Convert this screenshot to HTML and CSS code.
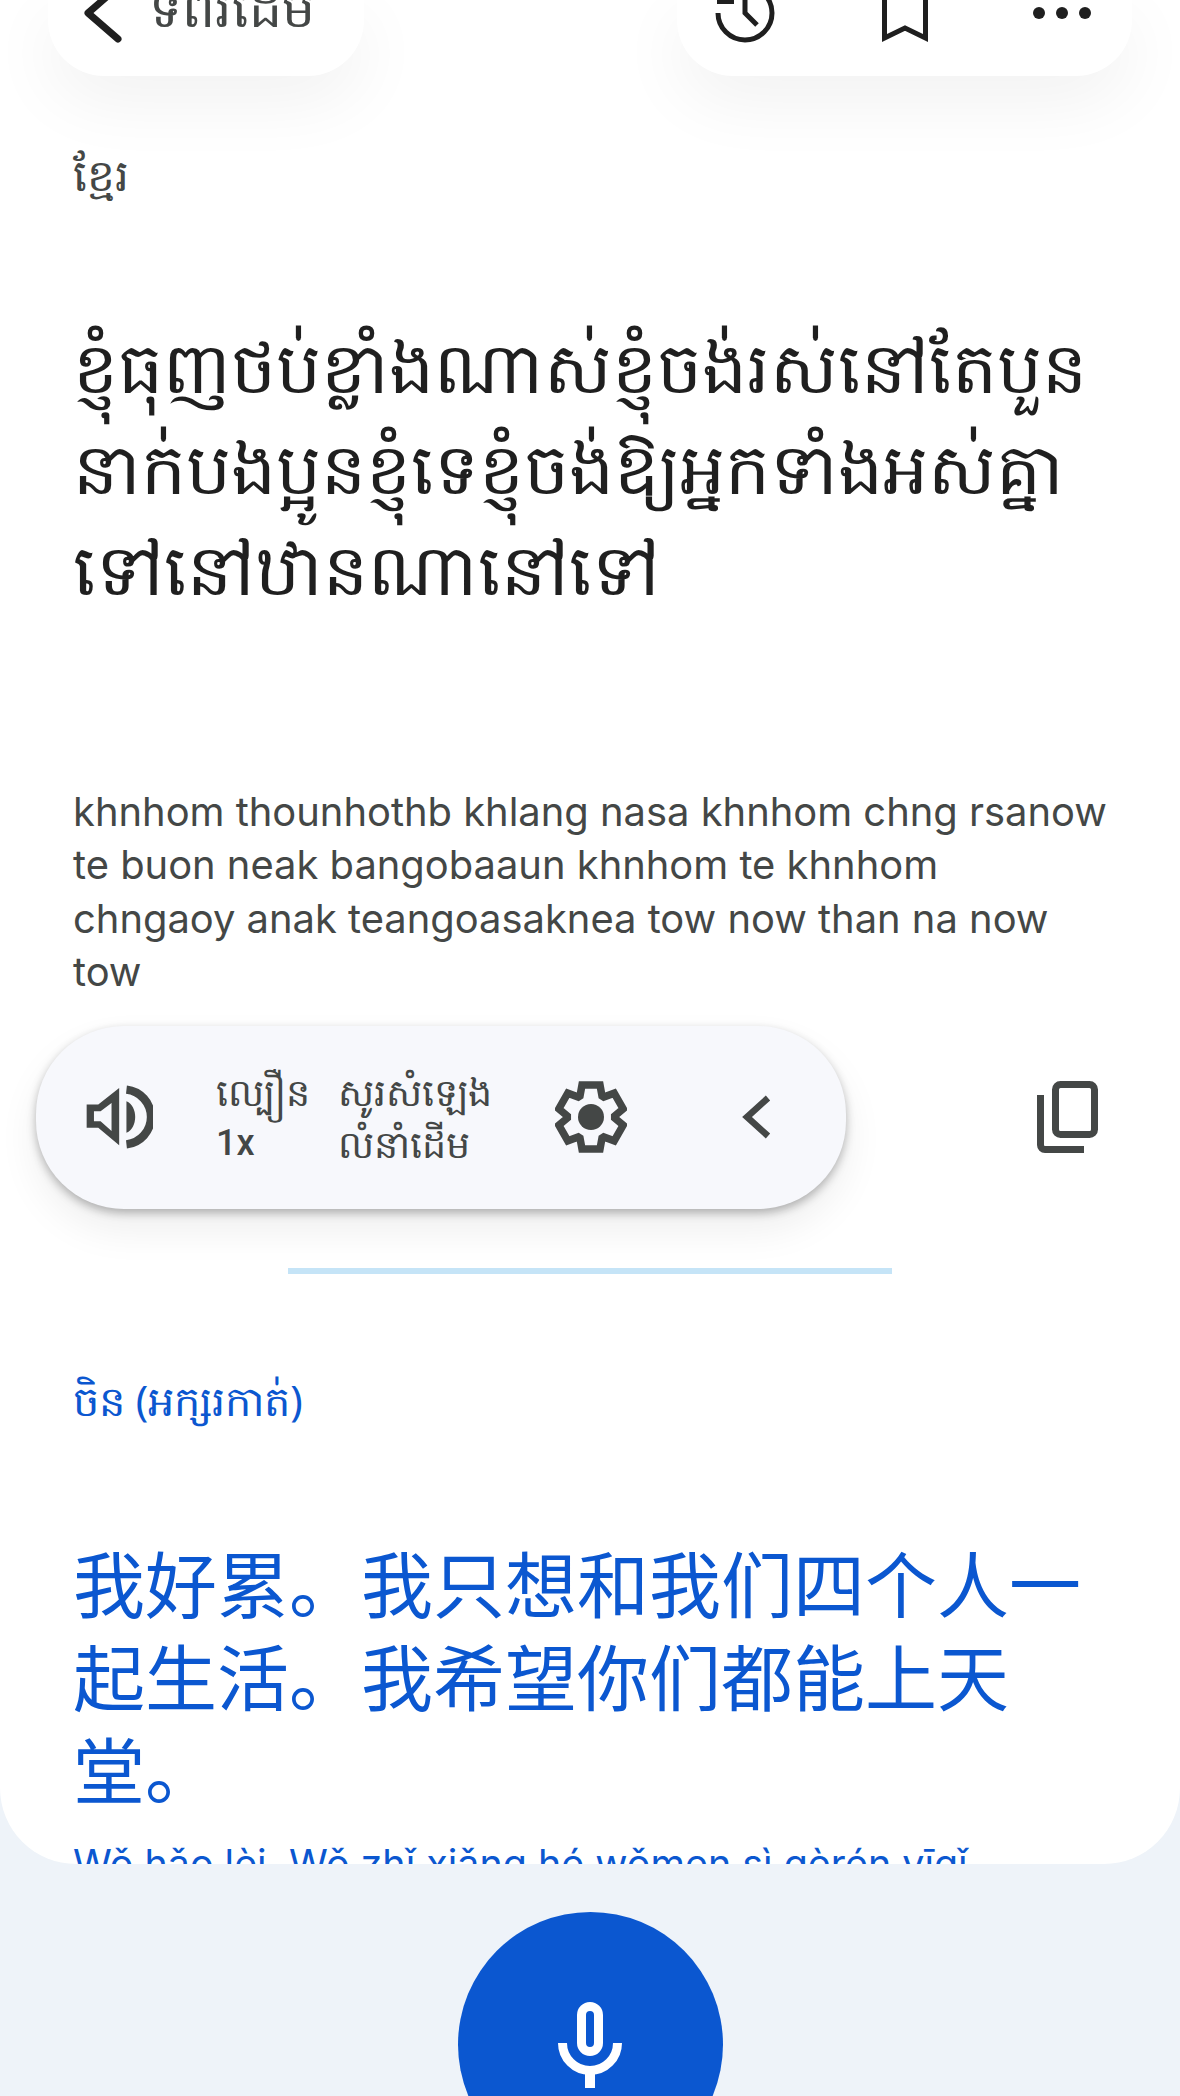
FILE: index.html
```html
<!DOCTYPE html>
<html lang="km">
<head>
<meta charset="utf-8">
<title>Translation</title>
<link rel="stylesheet" href="styles.css">
</head>
<body>
<div class="page">
  <main class="card">
    <header class="topbar">
      <div class="pill back-pill">
        <svg class="top-icon" viewBox="0 0 46 80" width="46" height="80"><path d="M38 7 8 33l30 26" fill="none" stroke="#1f1f1f" stroke-width="7" stroke-linecap="round" stroke-linejoin="round"/></svg>
        <span class="back-label">ទំព័រដើម</span>
      </div>
      <div class="pill action-pill">
        <svg class="top-icon" viewBox="0 0 64 80" width="64" height="80"><path d="M5 33A27 27 0 1 0 32 6M4 21.5h17M32 16v17l12 12" fill="none" stroke="#1f1f1f" stroke-width="5"/></svg>
        <svg class="top-icon" viewBox="0 0 50 80" width="50" height="80"><path d="M4.500 0v58L25 48l20.500 10V0" fill="none" stroke="#1f1f1f" stroke-width="5"/></svg>
        <svg class="top-icon" viewBox="0 0 64 80" width="64" height="80"><circle cx="6" cy="33" r="6" fill="#1f1f1f"/><circle cx="29" cy="33" r="6" fill="#1f1f1f"/><circle cx="52" cy="33" r="6" fill="#1f1f1f"/></svg>
      </div>
    </header>

    <section class="source">
      <p class="lang">ខ្មែរ</p>
      <p class="source-text">ខ្ញុំធុញថប់ខ្លាំងណាស់ខ្ញុំចង់រស់នៅតែបួន<br>នាក់បងប្អូនខ្ញុំទេខ្ញុំចង់ឱ្យអ្នកទាំងអស់គ្នា<br>ទៅនៅឋានណានៅទៅ</p>
      <p class="roman">khnhom thounhothb khlang nasa khnhom chng rsanow te buon neak bangobaaun khnhom te khnhom chngaoy anak teangoasaknea tow now than na now tow</p>
    </section>

    <div class="tools">
      <div class="audio-pill">
        <svg class="speaker" viewBox="165 190 205 205" width="68" height="68"><path fill="#444746" fill-rule="evenodd" d="M170 255h35l63-50v173l-63-53h-35zM192 275v30h20l33 30v-85l-33 25z"/><path fill="#444746" d="M290 245c35 15 35 80 0 95z"/><path d="M290 210a83 83 0 0 1 0 165" fill="none" stroke="#444746" stroke-width="25"/></svg>
        <div class="setting speed"><span>ល្បឿន</span><span class="latin">1x</span></div>
        <div class="setting voice"><span>សូរសំឡេង</span><span>លំនាំដើម</span></div>
        <svg class="gear" viewBox="0 0 72 72" width="72" height="72"><path fill="none" stroke="#444746" stroke-width="7.500" d="M27 4h18l2 11 1.700 1 10.500-3.800 9 15.600-8.500 7.200v2l8.500 7.200-9 15.600L48.700 56l-1.700 1-2 11H27l-2-11-1.700-1-10.500 3.800-9-15.600 8.500-7.200v-2l-8.500-7.200 9-15.600L23.300 16l1.700-1z"/><circle cx="36" cy="36" r="13" fill="#444746"/></svg>
        <svg class="chev" viewBox="0 0 32 48" width="32" height="48"><path d="M27 5 6 24l21 19" fill="none" stroke="#444746" stroke-width="6.500"/></svg>
      </div>
      <svg class="copy" viewBox="0 0 64 74" width="64" height="74"><rect x="19.500" y="4.500" width="39" height="50" rx="5" fill="none" stroke="#444746" stroke-width="7"/><path d="M4.500 15v50a4.500 4.500 0 0 0 4.500 4.500h39" fill="none" stroke="#444746" stroke-width="7"/></svg>
    </div>

    <div class="divider"></div>

    <section class="target">
      <p class="lang lang-blue">ចិន (អក្សរកាត់)</p>
      <p class="target-text">我好累。我只想和我们四个人一起生活。我希望你们都能上天堂。</p>
      <p class="roman roman-blue">Wǒ hǎo lèi. Wǒ zhǐ xiǎng hé wǒmen sì gèrén yīqǐ</p>
    </section>
  </main>

  <footer class="bottom">
    <div class="mic-btn">
      <svg viewBox="0 0 64 86" width="64" height="86"><rect x="23.500" y="4.500" width="17" height="45" rx="8.500" fill="none" stroke="#fff" stroke-width="9"/><path d="M4.500 41a27.500 27.500 0 0 0 55 0" fill="none" stroke="#fff" stroke-width="9"/><path d="M32 68v18" fill="none" stroke="#fff" stroke-width="10"/></svg>
    </div>
  </footer>
</div>
</body>
</html>
```
FILE: styles.css
```css
* { box-sizing: border-box; }
html, body { margin: 0; padding: 0; }
body { width: 1180px; height: 2096px; overflow: hidden; background: #eef3f9; font-family: "Noto Sans", "Roboto", sans-serif; }
p { margin: 0; }
.page { width: 1180px; height: 2096px; overflow: hidden; display: flex; flex-direction: column; }
.card { flex: none; height: 1864px; background: #fff; border-radius: 0 0 76px 76px; overflow: hidden; }
.topbar { height: 76px; padding: 0 48px; display: flex; justify-content: space-between; }
.pill { height: 76px; background: #fff; border-radius: 0 0 56px 56px; box-shadow: 0 24px 70px rgba(0,0,0,.06); display: flex; align-items: flex-start; overflow: hidden; }
.top-icon { flex: none; margin-top: -20px; }
.back-pill { width: 316px; padding-left: 32px; }
.back-label { margin-left: 23px; margin-top: -33px; font-size: 52px; line-height: 80px; color: #444746; white-space: nowrap; }
.action-pill { width: 455px; padding-left: 36px; gap: 103px; }
.source { padding: 68px 72px 0 73px; }
.lang { font-size: 44px; line-height: 60px; color: #444746; }
.source-text { margin-top: 111px; font-size: 71px; line-height: 101px; color: #1f1f1f; white-space: nowrap; }
.roman { margin-top: 167px; font-family: "Inter", sans-serif; font-size: 39.9px; line-height: 53.4px; color: #444746; }
.tools { margin-top: 27px; padding: 0 80px 0 36px; display: flex; align-items: center; justify-content: space-between; }
.audio-pill { width: 810px; height: 183px; border-radius: 88px; background: #f7f8fc; box-shadow: 0 4px 10px rgba(0,0,0,.28), 0 20px 40px rgba(0,0,0,.07); display: flex; align-items: center; padding-left: 49px; }
.speaker { flex: none; }
.setting { display: flex; flex-direction: column; font-size: 38px; line-height: 52px; color: #444746; white-space: nowrap; }
.speed { margin-left: 63px; width: 122px; }
.voice { width: 217px; }
.latin { font-family: "Roboto", sans-serif; font-size: 36px; font-weight: 500; }
.gear { flex: none; }
.chev { flex: none; margin-left: 114px; }
.copy { flex: none; }
.divider { width: 604px; height: 6px; margin: 59px auto 0; background: #c5e4f7; }
.target { padding: 96px 48px 0 73px; }
.lang-blue { color: #0b57d0; font-size: 41.5px; }
.target-text { margin-top: 104px; font-family: "Noto Sans CJK SC", sans-serif; font-size: 72px; line-height: 93px; color: #0b57d0; }
.roman-blue { margin-top: 25px; font-size: 39.4px; color: #0b57d0; white-space: nowrap; }
.bottom { flex: 1; min-height: 0; display: flex; justify-content: center; padding-top: 48px; }
.mic-btn { width: 265px; height: 265px; flex: none; border-radius: 50%; background: #0b57d0; display: flex; justify-content: center; padding-top: 90px; }
.mic-btn svg { flex: none; }
```
